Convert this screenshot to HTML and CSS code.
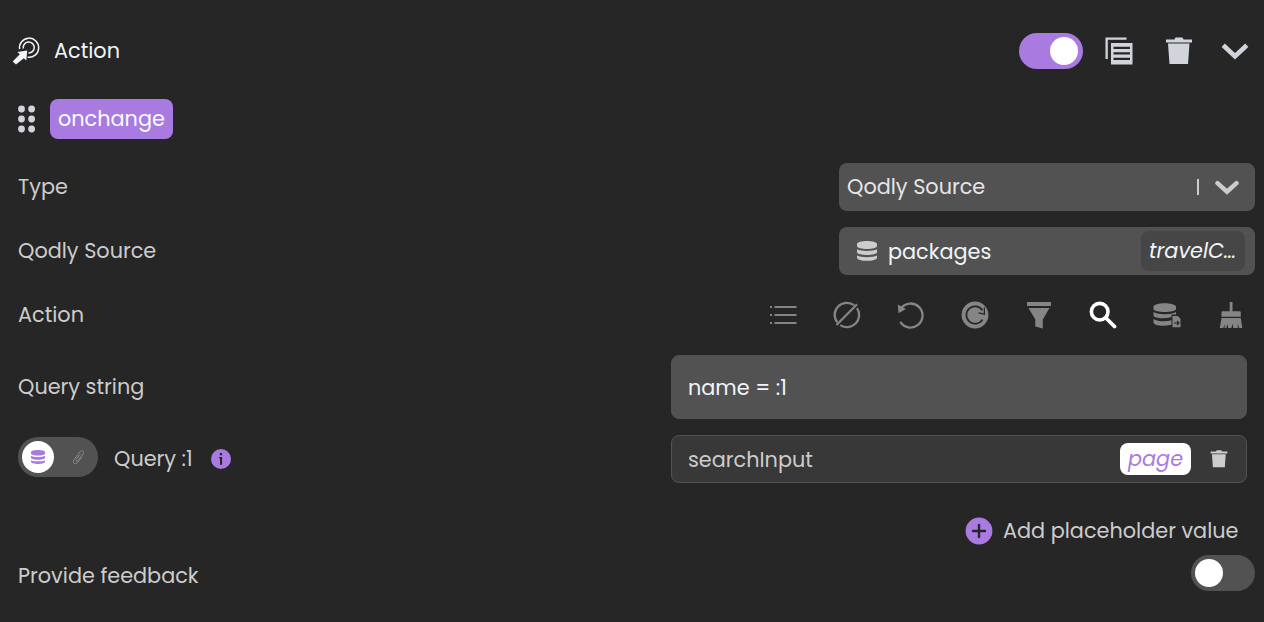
FILE: index.html
```html
<!DOCTYPE html>
<html lang="en">
<head>
<meta charset="utf-8">
<title>Action</title>
<link rel="stylesheet" href="styles.css">
</head>
<body>
<svg class="defs" width="0" height="0">
  <symbol id="trash" viewBox="0 0 28 28">
    <path d="M10.500 0.500h7l1 2h8.500v3H1v-3h8.500zM3 6.500h21.500L23 27H4.500z"/>
  </symbol>
  <symbol id="database" viewBox="0 0 20 20">
    <path d="M0 3C0-.9 20-.9 20 3v2C20 9 0 9 0 5zM0 8.300c4 2.300 16 2.300 20 0v3.200c-1 3.300-19 3.300-20 0zM0 14.500c4 2.300 16 2.300 20 0v2.200c-1 4.200-19 4.200-20 0z"/>
  </symbol>
</svg>
<main class="panel">
  <header class="header">
    <svg class="target" width="28" height="28" viewBox="0 0 28 28">
      <g fill="none" stroke="#f1f5f9" stroke-width="1.500">
        <path d="M7.600 12.200A9.600 9.600 0 1 1 15.600 20.200"/>
        <path d="M11.300 11.500A5.500 5.500 0 1 1 16.500 16"/>
      </g>
      <path fill="#f1f5f9" d="M5.300 15 15.200 13.600 14.300 23.500 11.800 21.200 4 27.600.7 24.500 7.800 17.200z"/>
    </svg>
    <h1 class="title">Action</h1>
    <span class="switch on"><i></i></span>
    <svg class="copy" width="28" height="28" viewBox="0 0 28 28" fill="#d1d5db">
      <path d="M.5.500h21v2.300H2.800V22H.5z"/>
      <path fill-rule="evenodd" d="M6 6h21.500v21.500H6zM8.500 9.700v2.300H25V9.700zM8.500 15.200v2.300H25v-2.300zM8.500 20.700v2.300H25v-2.300z"/>
    </svg>
    <svg class="bin" width="28" height="28" fill="#d1d5db"><use href="#trash"/></svg>
    <svg class="collapse" width="28" height="18" viewBox="0 0 28 18" fill="none" stroke="#d1d5db" stroke-width="4.600"><path d="M2.200 3.300 14 14.300 25.800 3.300"/></svg>
  </header>

  <div class="event">
    <svg width="18" height="28" viewBox="0 0 18 28" fill="#d1d5db">
      <circle cx="3.500" cy="4" r="3.400"/><circle cx="13.600" cy="4" r="3.400"/>
      <circle cx="3.500" cy="14" r="3.400"/><circle cx="13.600" cy="14" r="3.400"/>
      <circle cx="3.500" cy="24" r="3.400"/><circle cx="13.600" cy="24" r="3.400"/>
    </svg>
    <span class="tag">onchange</span>
  </div>

  <div class="row">
    <span>Type</span>
    <div class="field select">
      <span>Qodly Source</span>
      <i class="divider"></i>
      <svg width="24" height="16" viewBox="0 0 24 16" fill="none" stroke="#ccc" stroke-width="4.400" stroke-linecap="round"><path d="M2.500 4.200 12 12.700 21.500 4.200"/></svg>
    </div>
  </div>

  <div class="row">
    <span>Qodly Source</span>
    <div class="field source">
      <svg width="20" height="20" fill="#ccc"><use href="#database"/></svg>
      <span class="name">packages</span>
      <span class="chip">travelC…</span>
    </div>
  </div>

  <div class="row">
    <span>Action</span>
    <div class="tools">
      <svg viewBox="0 0 28 28"><path d="M1 5h2v2H1zm4.500 0h22v2h-22zM1 13h2v2H1zm4.500 0h22v2h-22zM1 21h2v2H1zm4.500 0h22v2h-22z"/></svg>
      <svg viewBox="0 0 28 28" fill="none" stroke="#858585" stroke-width="2.300"><path d="M4.200 21.300A12.100 12.100 0 0 1 21 4.200M24 7.200A12.100 12.100 0 0 1 7.300 24.100M3.500 24 24 3.200"/></svg>
      <svg viewBox="0 0 28 28"><path d="M4 7.200A12 12 0 1 1 3.300 20.800" fill="none" stroke="#858585" stroke-width="2.300"/><path d="M.8 3.500 9 8 1.500 12.300z"/></svg>
      <svg viewBox="0 0 28 28"><circle cx="14" cy="14" r="13.400"/><path d="M21.500 9.400A8.700 8.700 0 1 0 21.500 18.600" fill="none" stroke="#262626" stroke-width="1.700"/><path d="M23.400 6.500v6.700l-5.800-1.400" fill="none" stroke="#262626" stroke-width="1.200"/></svg>
      <svg viewBox="0 0 28 28"><path d="M2 1h24v4H2zM3.500 7h21l-6.700 11.500v9l-7.500-2v-7z"/></svg>
      <svg viewBox="0 0 28 28" fill="none" stroke="#fff"><circle cx="10.700" cy="10.700" r="8.300" stroke-width="3.600"/><path d="m17 17 8.500 8.500" stroke-width="3.800" stroke-linecap="round"/></svg>
      <svg viewBox="0 0 28 28"><path d="M.5 6c0-5 22.500-5 22.500 0v2C23 12 .5 12 .5 8zM.5 11c5 3 18 3 22.500 0v2.500h-4.500V16C12 18 1 17.500.5 14.500zM.5 18c4 2.500 12 3 18 1.200v4.600C11 25.500 1 25 .5 21.500z"/><path d="M19.500 15h5.300l2.700 3v8.300h-8z"/><path d="M21 22h5m-2-2 2 2-2 2" fill="none" stroke="#262626" stroke-width="1.200"/></svg>
      <svg viewBox="0 0 28 28"><path d="M12.700 1h2.800v9.300h7.300q1 0 1 1v4.500H4.500v-4.500q0-1 1-1h7.200zM4.500 17h19.300l1.500 10h-3.200l-1.300-4v4h-4.400l-1-4-1 4h-3.200l-.7-4-1.200 4H7.600l.2-4-1.500 4H2.800z"/></svg>
    </div>
  </div>

  <div class="row tall">
    <span>Query string</span>
    <div class="input filled"><span>name = :1</span></div>
  </div>

  <div class="row">
    <div class="query">
      <span class="mode">
        <span class="knob"><svg width="14" height="14" fill="#a97ae0"><use href="#database"/></svg></span>
        <svg class="clip" width="14" height="16" viewBox="0 0 14 16" fill="none" stroke="#8b8b8b" stroke-width="1"><path d="m10.800 8.500-4 4.700c-2.700 3.100-6 .5-3.700-2.700L8.800 3c2-2.700 5-.5 3.200 2.200l-5 6.300c-1.200 1.500-2.600.4-1.600-1.200L9.200 5.400"/></svg>
      </span>
      <span class="label">Query :1</span>
      <svg class="info" width="20" height="20" viewBox="0 0 20 20"><circle cx="10" cy="10" r="10" fill="#a97ae0"/><path fill="#262626" d="M8.900 4h2.200v2.200H8.900zM8.200 8h2.900v7.800H9V9.500h-.8z"/></svg>
    </div>
    <div class="input outline">
      <span>searchInput</span>
      <span class="scope">page</span>
      <svg width="18" height="18" fill="#ccc"><use href="#trash"/></svg>
    </div>
  </div>

  <div class="add">
    <svg width="28" height="28" viewBox="0 0 28 28"><circle cx="14" cy="14" r="13.400" fill="#a97ae0"/><path d="M14 8v12M8 14h12" stroke="#262626" stroke-width="2.400" stroke-linecap="round"/></svg>
    <span class="label">Add placeholder value</span>
  </div>

  <div class="feedback">
    <span class="label">Provide feedback</span>
    <span class="switch"><i></i></span>
  </div>
</main>
</body>
</html>
```
FILE: styles.css
```css
* { box-sizing: border-box; }
body {
  margin: 0;
  background: #262626;
  color: #ccc;
  font: 400 20.8px/32px Poppins, Inter, sans-serif;
}
svg { display: block; flex: none; }
.defs { position: absolute; }
.panel { width: 1264px; height: 622px; overflow: hidden; }
.panel span, .title { white-space: nowrap; }
.header { display: flex; align-items: center; height: 102px; padding: 0 15px 0 12px; }
.title { margin: 0 auto 0 14px; font: inherit; color: #f1f5f9; }
.switch {
  display: flex; flex: none; width: 64px; height: 36px; padding: 4px;
  border-radius: 18px; background: #525252;
}
.switch i { width: 28px; height: 28px; border-radius: 50%; background: #fff; }
.switch.on { justify-content: flex-end; padding-right: 5px; background: #a97ae0; }
.copy { margin-left: 22px; }
.bin { margin-left: 32px; }
.collapse { margin-left: 28px; }
.event { display: flex; align-items: center; gap: 14px; height: 40px; margin: -3px 0 24px 18px; }
.tag {
  display: flex; align-items: center; width: 123px; height: 40px; padding-left: 8px;
  border-radius: 8px; background: #a97ae0; color: #f8fafc;
}
.row {
  display: flex; align-items: center; justify-content: space-between;
  height: 48px; margin: 0 9px 16px 18px;
}
.row.tall { height: 64px; }
.field {
  display: flex; align-items: center; width: 416px; height: 48px;
  border-radius: 8px; background: #525252;
}
.select { padding: 0 16px 0 8px; color: #e5e5e5; }
.divider { width: 2px; height: 16px; margin: 0 16px 0 auto; background: #ccc; }
.source { padding: 0 10px 0 18px; color: #f1f5f9; }
.source .name { margin-left: 11px; padding-top: 2px; }
.chip {
  display: flex; align-items: center; width: 104px; height: 40px; margin-left: auto;
  padding-left: 8px; border-radius: 8px; background: #464646; font-style: italic;
}
.tools { display: flex; gap: 36px; margin-right: 10px; fill: #858585; }
.tools svg { width: 28px; height: 28px; }
.input {
  display: flex; align-items: center; width: 576px; height: 100%;
  margin-right: 8px; padding: 0 18px 0 16px; border: 1px solid #525252; border-radius: 8px;
}
.input > span:first-child { padding-top: 2px; }
.filled { background: #525252; color: #f1f5f9; }
.outline { background: #383838; }
.query { display: flex; align-items: center; }
.mode {
  display: flex; align-items: center; width: 80px; height: 40px; margin: -4px 16px 0 0;
  padding: 4px; border-radius: 20px; background: #525252;
}
.query .label { width: 79px; }
.knob {
  display: flex; align-items: center; justify-content: center;
  width: 32px; height: 32px; border-radius: 50%; background: #fff;
}
.clip { margin-left: 17px; }
.info { margin-left: 18px; }
.scope {
  display: flex; align-items: center; width: 71px; height: 32px; margin: 0 19px 0 auto;
  padding-left: 8px; border-radius: 8px; background: #fff; color: #a97ae0; font-style: italic;
}
.add {
  display: flex; align-items: center; justify-content: flex-end; gap: 10px;
  height: 32px; margin: 32px 25px 8px 0;
}
.add .label { width: 236px; }
.feedback {
  display: flex; align-items: center; justify-content: space-between;
  height: 36px; margin: 0 9px 0 18px;
}
.feedback .label { padding-top: 5px; }
```
